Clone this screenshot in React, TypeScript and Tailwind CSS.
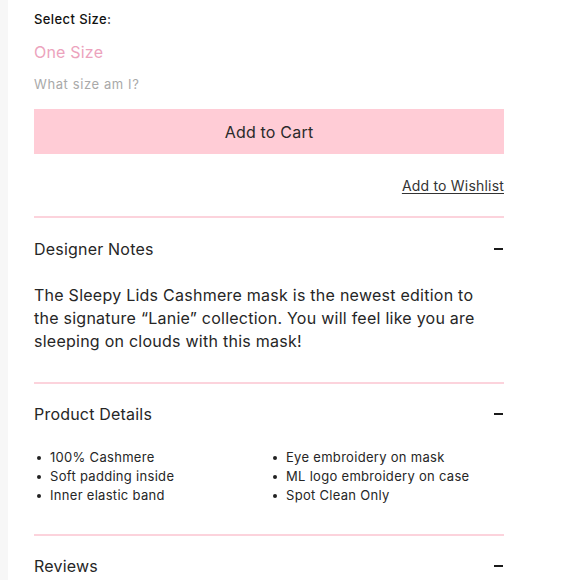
import React from 'react';

// Product purchase panel: size picker, cart button and accordion sections

const leftDetails = ['100% Cashmere', 'Soft padding inside', 'Inner elastic band'];
const rightDetails = ['Eye embroidery on mask', 'ML logo embroidery on case', 'Spot Clean Only'];

function Minus() {
  return <span className="block h-[2px] w-[9px] bg-[#1a1a1a]" />;
}

function SectionHeader({ title }: { title: string }) {
  return (
    <div className="flex items-center justify-between text-[16px] leading-[24px] tracking-[0.2px] text-[#262626]">
      <span>{title}</span>
      <span className="pr-[1px]"><Minus /></span>
    </div>
  );
}

function Divider() {
  return <div className="h-[2px] w-full bg-[#fcd3dc]" />;
}

function BulletList({ items }: { items: string[] }) {
  return (
    <ul className="flex flex-col">
      {items.map((item) => (
        <li key={item} className="flex items-center text-[13px] leading-[19px] tracking-[0.3px] text-[#262626]">
          <span className="mr-[9px] ml-[3px] inline-block h-[4px] w-[4px] rounded-full bg-[#222]" />
          {item}
        </li>
      ))}
    </ul>
  );
}

export default function App() {
  return (
    <div className="flex min-h-screen bg-white" style={{ fontFamily: 'Inter, "Liberation Sans", sans-serif' }}>
      <div className="w-[8px] shrink-0 bg-[#f7f7f7]" />
      <div className="ml-[26px] w-[470px] pt-[9px]">
        <div className="text-[13px] leading-[20px] font-medium tracking-[0.4px] text-[#111]">Select Size:</div>
        <div className="mt-[11px] text-[16px] leading-[24px] tracking-[0.2px] text-[#eca3bd]">One Size</div>
        <div className="mt-[10px] text-[13px] leading-[20px] tracking-[0.6px] text-[#a9a9a9]">What size am I?</div>

        <button className="mt-[15px] flex h-[45px] w-full items-center justify-center bg-[#ffccd6] text-[16px] tracking-[0.2px] text-[#2a2a2a]">
          Add to Cart
        </button>

        <div className="mt-[22px] flex justify-end">
          <a className="text-[14px] leading-[20px] tracking-[0.2px] text-[#333] underline underline-offset-2">Add to Wishlist</a>
        </div>

        <div className="mt-[20px]"><Divider /></div>

        <div className="pt-[19px]">
          <SectionHeader title="Designer Notes" />
          <p className="mt-[23px] pr-[20px] text-[16px] leading-[23px] tracking-[0.25px] text-[#262626]">
            The Sleepy Lids Cashmere mask is the newest edition to the signature “Lanie” collection. You will feel like you are sleeping on clouds with this mask!
          </p>
        </div>

        <div className="mt-[29px]"><Divider /></div>

        <div className="pt-[18px]">
          <SectionHeader title="Product Details" />
          <div className="mt-[22px] grid grid-cols-[236px_1fr]">
            <BulletList items={leftDetails} />
            <BulletList items={rightDetails} />
          </div>
        </div>

        <div className="mt-[29px]"><Divider /></div>

        <div className="pt-[18px]">
          <SectionHeader title="Reviews" />
        </div>
      </div>
    </div>
  );
}
